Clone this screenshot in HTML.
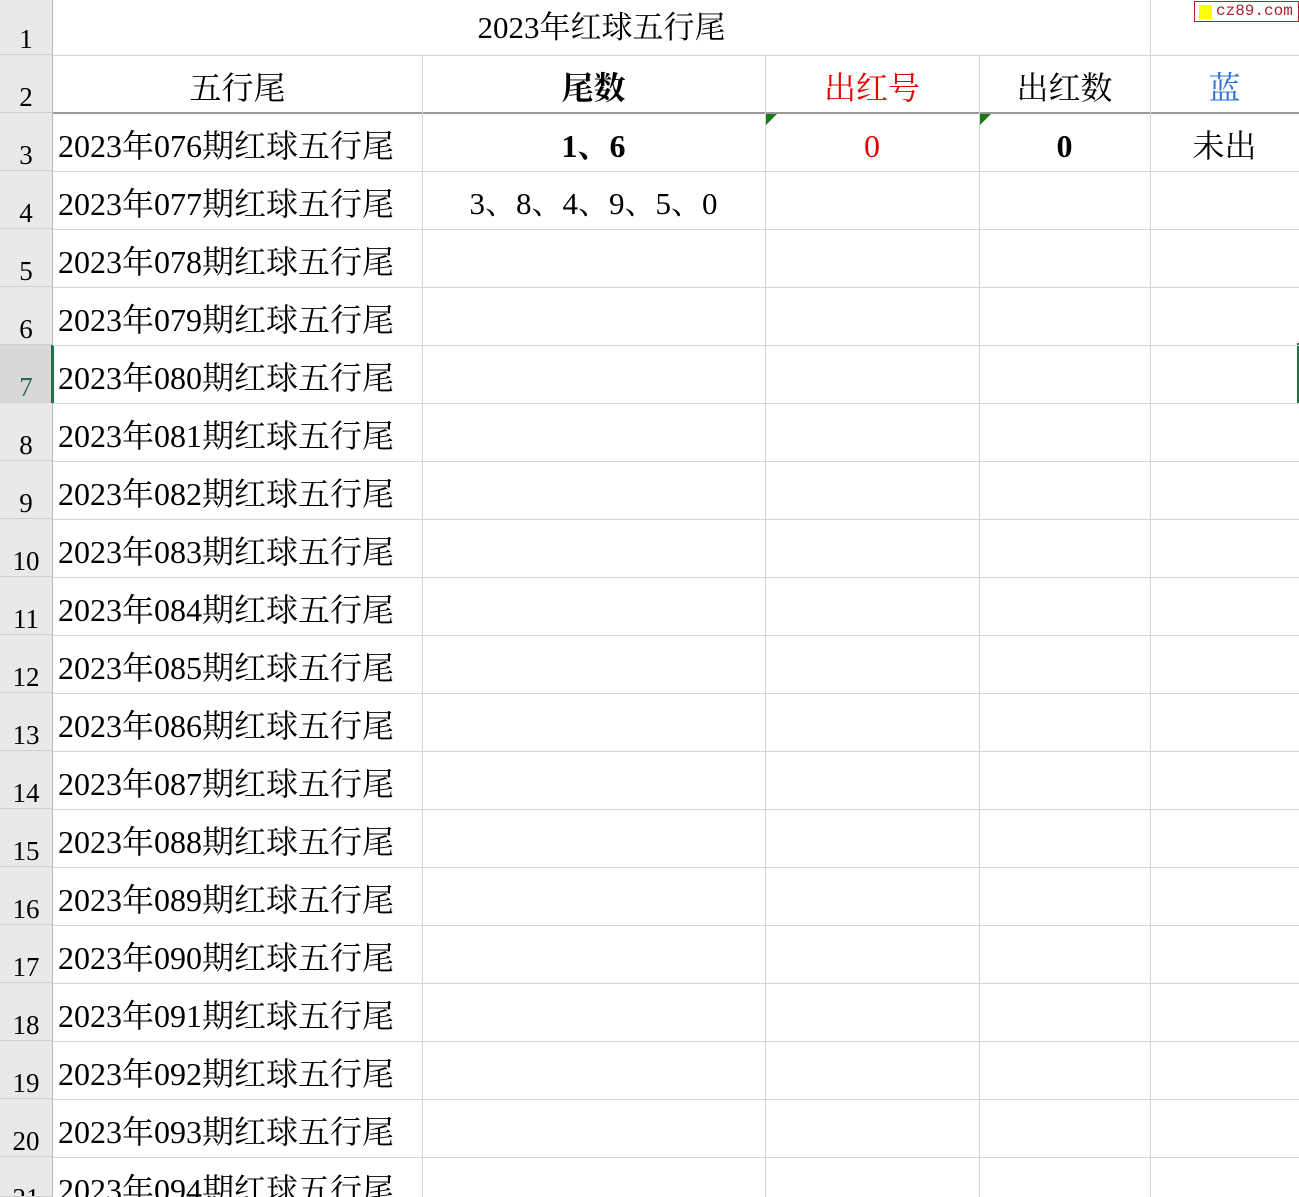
<!DOCTYPE html>
<html><head><meta charset="utf-8">
<style>
*{margin:0;padding:0;box-sizing:border-box}
html,body{width:1299px;height:1197px;overflow:hidden}
body{background:#fff;position:relative;font-family:"Liberation Serif","Noto Serif CJK SC",serif;color:#000}
.rh{position:absolute;left:0;width:53px;background:#e9e9e9;border-bottom:1px solid #cfcfcf;border-right:1px solid #b8b8b8;font-size:27px;text-align:center;line-height:1}
.rh span{position:absolute;left:0;right:0;bottom:1px}
.hl{position:absolute;left:53px;right:0;height:1px;background:#d4d4d4}
.vl{position:absolute;width:1px;background:#d4d4d4}
.t{position:absolute;font-size:32px;line-height:1;white-space:nowrap}
.c{text-align:center}
.tri{position:absolute;width:0;height:0;border-top:11px solid #1a7a1a;border-right:11px solid transparent}
</style></head><body>
<div class="rh" style="top:0;height:55px"><span>1</span></div>
<div class="rh" style="top:55px;height:58px"><span>2</span></div>
<div class="rh" style="top:113px;height:58px"><span>3</span></div>
<div class="rh" style="top:171px;height:58px"><span>4</span></div>
<div class="rh" style="top:229px;height:58px"><span>5</span></div>
<div class="rh" style="top:287px;height:58px"><span>6</span></div>
<div class="rh" style="top:345px;height:58px;background:#d8d8d8;color:#2a6a45"><span>7</span></div>
<div class="rh" style="top:403px;height:58px"><span>8</span></div>
<div class="rh" style="top:461px;height:58px"><span>9</span></div>
<div class="rh" style="top:519px;height:58px"><span>10</span></div>
<div class="rh" style="top:577px;height:58px"><span>11</span></div>
<div class="rh" style="top:635px;height:58px"><span>12</span></div>
<div class="rh" style="top:693px;height:58px"><span>13</span></div>
<div class="rh" style="top:751px;height:58px"><span>14</span></div>
<div class="rh" style="top:809px;height:58px"><span>15</span></div>
<div class="rh" style="top:867px;height:58px"><span>16</span></div>
<div class="rh" style="top:925px;height:58px"><span>17</span></div>
<div class="rh" style="top:983px;height:58px"><span>18</span></div>
<div class="rh" style="top:1041px;height:58px"><span>19</span></div>
<div class="rh" style="top:1099px;height:58px"><span>20</span></div>
<div class="rh" style="top:1157px;height:40px;overflow:hidden"><span style="top:28px;bottom:auto">21</span></div>
<div style="position:absolute;left:51px;top:345px;width:3px;height:58px;background:#217346"></div>
<div style="position:absolute;left:1297px;top:343px;width:2px;height:61px;background:#217346"></div>

<div class="hl" style="top:55px"></div>
<div class="hl" style="top:112px;height:2px;background:#9a9a9a"></div>
<div class="hl" style="top:171px"></div>
<div class="hl" style="top:229px"></div>
<div class="hl" style="top:287px"></div>
<div class="hl" style="top:345px"></div>
<div class="hl" style="top:403px"></div>
<div class="hl" style="top:461px"></div>
<div class="hl" style="top:519px"></div>
<div class="hl" style="top:577px"></div>
<div class="hl" style="top:635px"></div>
<div class="hl" style="top:693px"></div>
<div class="hl" style="top:751px"></div>
<div class="hl" style="top:809px"></div>
<div class="hl" style="top:867px"></div>
<div class="hl" style="top:925px"></div>
<div class="hl" style="top:983px"></div>
<div class="hl" style="top:1041px"></div>
<div class="hl" style="top:1099px"></div>
<div class="hl" style="top:1157px"></div>
<div class="vl" style="left:422px;top:55px;bottom:0"></div>
<div class="vl" style="left:765px;top:55px;bottom:0"></div>
<div class="vl" style="left:979px;top:55px;bottom:0"></div>
<div class="vl" style="left:1150px;top:0;bottom:0"></div>

<div style="position:absolute;left:1194px;top:1px;width:105px;height:21px;border:1px solid #b02030;background:#fff;font-family:'Liberation Mono',monospace;font-size:16px;line-height:19px;color:#b02030;padding-left:21px;white-space:nowrap">cz89.com</div>
<div style="position:absolute;left:1199px;top:5px;width:13px;height:14px;background:#ffff00"></div>

<div class="t c" style="left:53px;width:1097px;top:12px;font-size:31px">2023年红球五行尾</div>
<div class="t c" style="left:53px;width:369px;top:72px">五行尾</div>
<div class="t c" style="left:422px;width:343px;top:72px;font-weight:bold">尾数</div>
<div class="t c" style="left:765px;width:214px;top:72px;color:#e60000">出红号</div>
<div class="t c" style="left:979px;width:171px;top:72px">出红数</div>
<div class="t c" style="left:1150px;width:149px;top:72px;color:#2a6fd6">蓝</div>

<div class="tri" style="left:766px;top:114px"></div>
<div class="tri" style="left:980px;top:114px"></div>
<div class="t c" style="left:422px;width:343px;top:130px;font-weight:bold">1、6</div>
<div class="t c" style="left:765px;width:214px;top:130px;color:#e60000">0</div>
<div class="t c" style="left:979px;width:171px;top:130px;font-weight:bold">0</div>
<div class="t c" style="left:1150px;width:149px;top:130px">未出</div>
<div class="t c" style="left:422px;width:343px;top:188px;font-size:31px">3、8、4、9、5、0</div>

<div class="t" style="left:58px;top:130px">2023年076期红球五行尾</div>
<div class="t" style="left:58px;top:188px">2023年077期红球五行尾</div>
<div class="t" style="left:58px;top:246px">2023年078期红球五行尾</div>
<div class="t" style="left:58px;top:304px">2023年079期红球五行尾</div>
<div class="t" style="left:58px;top:362px">2023年080期红球五行尾</div>
<div class="t" style="left:58px;top:420px">2023年081期红球五行尾</div>
<div class="t" style="left:58px;top:478px">2023年082期红球五行尾</div>
<div class="t" style="left:58px;top:536px">2023年083期红球五行尾</div>
<div class="t" style="left:58px;top:594px">2023年084期红球五行尾</div>
<div class="t" style="left:58px;top:652px">2023年085期红球五行尾</div>
<div class="t" style="left:58px;top:710px">2023年086期红球五行尾</div>
<div class="t" style="left:58px;top:768px">2023年087期红球五行尾</div>
<div class="t" style="left:58px;top:826px">2023年088期红球五行尾</div>
<div class="t" style="left:58px;top:884px">2023年089期红球五行尾</div>
<div class="t" style="left:58px;top:942px">2023年090期红球五行尾</div>
<div class="t" style="left:58px;top:1000px">2023年091期红球五行尾</div>
<div class="t" style="left:58px;top:1058px">2023年092期红球五行尾</div>
<div class="t" style="left:58px;top:1116px">2023年093期红球五行尾</div>
<div class="t" style="left:58px;top:1174px">2023年094期红球五行尾</div>
</body></html>
